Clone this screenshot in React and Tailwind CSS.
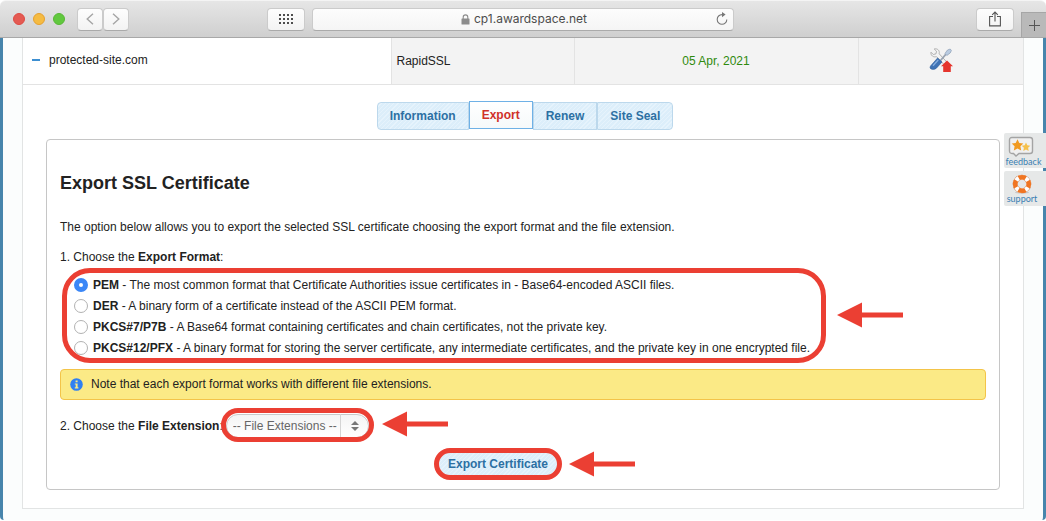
import React, { useState } from "react";

const STRIPES =
  "bg-[repeating-linear-gradient(135deg,#dceefa_0px,#dceefa_2px,#e6f3fc_2px,#e6f3fc_3px)]";

const tabs = ["Information", "Export", "Renew", "Site Seal"];

const formats = [
  {
    id: "pem",
    name: "PEM",
    text: "The most common format that Certificate Authorities issue certificates in - Base64-encoded ASCII files.",
  },
  {
    id: "der",
    name: "DER",
    text: "A binary form of a certificate instead of the ASCII PEM format.",
  },
  {
    id: "p7b",
    name: "PKCS#7/P7B",
    text: "A Base64 format containing certificates and chain certificates, not the private key.",
  },
  {
    id: "pfx",
    name: "PKCS#12/PFX",
    text: "A binary format for storing the server certificate, any intermediate certificates, and the private key in one encrypted file.",
  },
];

function Arrow({ className }) {
  return (
    <svg
      viewBox="0 0 66 26"
      className={`absolute h-[26px] w-[66px] ${className}`}
      fill="#eb3f33"
      aria-hidden="true"
    >
      <path d="M0 13 25 0.5V10.5H66V15.5H25V25.5Z" />
    </svg>
  );
}

function ToolbarButton({ label, className, children }) {
  return (
    <button
      type="button"
      aria-label={label}
      className={`flex h-[23px] items-center justify-center rounded border border-[#cbcbcb] border-b-[#aaaaaa] bg-linear-to-b from-[#fdfdfd] to-[#f3f3f3] ${className}`}
    >
      {children}
    </button>
  );
}

function BrowserBar() {
  return (
    <header className="grid h-[38px] grid-cols-[1fr_minmax(0,422px)_1fr] items-center rounded-t-md border-t border-b border-t-[#f4f4f4] border-b-[#a8a8a8] bg-linear-to-b from-[#e6e6e6] to-[#cfcfcf]">
      <div className="flex items-center justify-between pr-[7px] pl-[13px]">
        <div className="flex items-center">
          <div className="mr-3 flex gap-2">
            <span className="size-3 rounded-full border border-[#de4a43] bg-[#e45a52]" />
            <span className="size-3 rounded-full border border-[#e5a02f] bg-[#f5bb42]" />
            <span className="size-3 rounded-full border border-[#57b735] bg-[#61c83e]" />
          </div>
          <ToolbarButton label="Back" className="w-[26px]">
            <svg width="8" height="12" viewBox="0 0 8 12" fill="none" stroke="#a5a5a5" strokeWidth="1.4">
              <path d="M7 .7 1.2 6 7 11.3" />
            </svg>
          </ToolbarButton>
          <ToolbarButton label="Forward" className="w-[26px]">
            <svg width="8" height="12" viewBox="0 0 8 12" fill="none" stroke="#a5a5a5" strokeWidth="1.4">
              <path d="M1 .7 6.8 6 1 11.3" />
            </svg>
          </ToolbarButton>
        </div>
        <ToolbarButton label="Show tabs" className="w-[38px]">
          <svg width="14" height="10" viewBox="0 0 14 10" fill="#4d4d4d">
            {[0, 4, 8].map((y) =>
              [0, 4, 8, 12].map((x) => <rect key={`${x}-${y}`} x={x} y={y} width="2" height="2" />)
            )}
          </svg>
        </ToolbarButton>
      </div>

      <div className="flex h-[23px] items-center rounded border border-[#cbcbcb] border-b-[#aaaaaa] bg-linear-to-b from-[#fdfdfd] to-[#f5f5f5] pr-1 pl-5">
        <div className="flex flex-1 items-center justify-center gap-1 font-[Inter,sans-serif] text-[12px] leading-4 text-[#4c4c4c]">
          <svg width="9" height="11" viewBox="0 0 9 11">
            <rect x="0.5" y="4.5" width="8" height="6" rx=".6" fill="#8c8c8c" />
            <path d="M2.2 5V3.2a2.3 2.3 0 0 1 4.6 0V5" fill="none" stroke="#8c8c8c" strokeWidth="1.1" />
          </svg>
          <span>cp1.awardspace.net</span>
        </div>
        <button type="button" aria-label="Reload">
          <svg width="14" height="14" viewBox="0 0 14 14" fill="none" stroke="#777" strokeWidth="1.1">
            <path d="M8.5 2.6H7A4.8 4.8 0 1 0 11.8 7.4" />
            <path d="M7 0 10.6 2.6 7 5.2Z" fill="#777" stroke="none" />
          </svg>
        </button>
      </div>

      <div className="flex h-full items-center justify-end gap-[7px]">
        <ToolbarButton label="Share" className="w-[38px]">
          <svg width="12" height="16" viewBox="0 0 12 16" fill="none" stroke="#555" strokeWidth="1.1">
            <path d="M4 5.5H.6v9.4h10.8V5.5H8" />
            <path d="M6 10.5V1M3.2 3.8 6 1l2.8 2.8" />
          </svg>
        </ToolbarButton>
        <button
          type="button"
          aria-label="New tab"
          className="flex h-[25px] w-[25px] items-center justify-center self-end border-t border-l border-[#a6a6a6] bg-[#b9b9b9]"
        >
          <svg width="11" height="11" viewBox="0 0 11 11" stroke="#555">
            <path d="M5.5 0V11M0 5.5H11" />
          </svg>
        </button>
      </div>
    </header>
  );
}

function ToolsIcon() {
  return (
    <svg width="26" height="26" viewBox="0 0 26 26">
      <path
        d="M3 5.2 5.3 7.5 8 6.8 8.5 4.2 6.2 2C9.3 1 12 3.6 11.2 6.8L21 17.5 18.5 20 8.4 9.6C5.6 10.7 2.3 8.4 3 5.2Z"
        fill="#f3f3f3"
        stroke="#a9a9a9"
        strokeWidth=".9"
      />
      <path d="M12.5 13.5 18 7.2" stroke="#9aa4b2" strokeWidth="1.8" />
      <path d="M17 6.4 19.5 3 22.2 2 23.4 3.5 22.2 6 18.8 8.5Z" fill="#b9cbe1" stroke="#8d9fb6" strokeWidth=".7" />
      <path
        d="M9.6 11 14 15 8.4 21.2C6.7 22.9 2.6 22.7 2.1 21 1.8 19.6 3 18.4 3.8 17.5Z"
        fill="#3f73b5"
        stroke="#2b5c9b"
        strokeWidth=".6"
      />
      <path d="M5 18.7 10.2 13" stroke="#86aee0" strokeWidth="1.3" />
      <path d="M19 13.5 25 19.3H22.8V25H15.2V19.3H13Z" fill="#e5352d" />
    </svg>
  );
}

function CertificateRow() {
  return (
    <table className="w-full table-fixed border-collapse">
      <colgroup>
        <col />
        <col className="w-[183px]" />
        <col className="w-[284px]" />
        <col className="w-[165px]" />
      </colgroup>
      <tbody>
        <tr className="h-[46px] border-b border-[#e3e3e3]">
          <td className="pb-px pl-[9px]">
            <span className="flex items-center gap-[9px]">
              <span className="h-[2px] w-2 bg-[#3d8fd1]" />
              protected-site.com
            </span>
          </td>
          <td className="border-l border-[#e3e3e3] bg-[#f3f3f3] pl-[5px]">RapidSSL</td>
          <td className="border-l border-[#e3e3e3] bg-[#f3f3f3] text-center text-[#2f8a0d]">
            05 Apr, 2021
          </td>
          <td className="border-l border-[#e3e3e3] bg-[#f3f3f3] pb-px">
            <a href="#manage" aria-label="Manage" className="flex justify-center">
              <ToolsIcon />
            </a>
          </td>
        </tr>
      </tbody>
    </table>
  );
}

function TabBar({ active, onSelect }) {
  return (
    <nav className="mt-4 flex items-start justify-center pl-1 font-bold">
      {tabs.map((tab) => (
        <button
          key={tab}
          type="button"
          onClick={() => onSelect(tab)}
          className={
            tab === active
              ? "h-[28px] border border-[#6fb1e6] bg-linear-to-b from-white to-[#f6f9fa] px-3 text-[#d0312a]"
              : `mt-px h-[28px] border border-[#bcd8ec] px-3 text-[#2c70a3] first:rounded-l last:rounded-r ${STRIPES}`
          }
        >
          {tab}
        </button>
      ))}
    </nav>
  );
}

function FormatList({ value, onChange }) {
  return (
    <div role="radiogroup" aria-labelledby="format-label" className="relative mt-[10px] ml-[14px] w-fit">
      {formats.map((f) => (
        <label key={f.id} className="flex h-[21px] items-center gap-[5px]">
          <input
            type="radio"
            name="format"
            value={f.id}
            checked={value === f.id}
            onChange={() => onChange(f.id)}
            className="size-[14px] appearance-none rounded-full border border-[#b2b2b2] bg-white checked:border-[5px] checked:border-[#3b87f7]"
          />
          <span>
            <b>{f.name}</b> - {f.text}
          </span>
        </label>
      ))}
      <span className="pointer-events-none absolute -top-[7px] -right-4 -bottom-1 -left-3 rounded-[28px] border-[5px] border-[#eb3f33]" />
      <Arrow className="top-[27px] left-full ml-[27px]" />
    </div>
  );
}

function SideLinks() {
  return (
    <aside className="absolute top-[133px] right-0 flex w-[42px] flex-col gap-[3px] font-[Lato,sans-serif] text-[9px] leading-[10px] text-[#3a80b3]">
      <a href="#feedback" className="flex h-[35px] flex-col items-center rounded-l-xs bg-[#e6e8e8] pt-[3px] pr-[3px]">
        <svg width="26" height="21" viewBox="0 0 26 21" className="mr-[6px] shrink-0">
          <path
            d="M4 1.5H22Q24.5 1.5 24.5 4V15Q24.5 17.5 22 17.5H11L8 20 5.5 17.5H4Q1.5 17.5 1.5 15V4Q1.5 1.5 4 1.5Z"
            fill="#f0f0f0"
            stroke="#a4a4a4"
            strokeWidth="1.4"
          />
          <path d="m9.5 3.2 1.8 3.7 4 .5-2.9 2.8.8 4.2-3.7-2-3.7 2 .8-4.2-2.9-2.8 4-.5Z" fill="#f19a20" />
          <path d="m18 6.5 1.3 2.8 3 .4-2.2 2.1.6 3.1-2.7-1.5-2.7 1.5.6-3.1-2.2-2.1 3-.4Z" fill="#f5c04b" />
        </svg>
        feedback
      </a>
      <a href="#support" className="flex h-[35px] flex-col items-center rounded-l-xs bg-[#e6e8e8] pt-[3px] pr-[6px]">
        <svg width="20" height="20" viewBox="0 0 20 20" className="shrink-0">
          <ellipse cx="10" cy="18.5" rx="7" ry="1" fill="#c8c8c8" />
          <circle cx="10" cy="10" r="6.8" fill="none" stroke="#c87a4a" strokeWidth="5" />
          <circle cx="10" cy="10" r="6.8" fill="none" stroke="#fff" strokeWidth="4.4" />
          <circle
            cx="10"
            cy="10"
            r="6.8"
            fill="none"
            stroke="#f07522"
            strokeWidth="4.6"
            strokeDasharray="7.2 3.48"
            strokeDashoffset="3.6"
          />
        </svg>
        support
      </a>
    </aside>
  );
}

export default function App() {
  const [activeTab, setActiveTab] = useState("Export");
  const [format, setFormat] = useState("pem");
  const [extension, setExtension] = useState("");

  return (
    <div className="relative bg-white font-['Liberation_Sans',Arial,sans-serif] text-[12px] leading-4 text-[#222]">
      <BrowserBar />
      <main className="mb-px rounded-b-sm border-x-[3px] border-[#4785ac] bg-[#fbfdfd] px-[19px] pb-[11px]">
        <div className="border border-t-0 border-[#e2e4e4] bg-white pb-[18px]">
          <CertificateRow />
          <TabBar active={activeTab} onSelect={setActiveTab} />

          <section className="mx-[23px] mt-[9px] rounded border border-[#c6c6c6] px-[13px] pt-[31px] pb-[13px]">
            <h1 className="text-[18px] leading-6 font-bold">Export SSL Certificate</h1>
            <p className="mt-6">
              The option below allows you to export the selected SSL certificate choosing the export
              format and the file extension.
            </p>
            <p id="format-label" className="mt-[14px]">
              1. Choose the <b>Export Format</b>:
            </p>
            <FormatList value={format} onChange={setFormat} />

            <div className="mt-[10px] flex h-[31px] items-center gap-2 rounded border border-[#f3c449] bg-[#fbea86] pl-[9px]">
              <svg width="13" height="13" viewBox="0 0 13 13">
                <circle cx="6.5" cy="6.5" r="6.3" fill="#2f80f2" />
                <path d="M5.6 2.6h2v1.7h-2zM4.8 5.4h2.8v3.9h.8v1.1H4.8V9.3h.9V6.5h-.9z" fill="#fbea86" />
              </svg>
              <span className="pb-px">Note that each export format works with different file extensions.</span>
            </div>

            <div className="mt-[14px] flex items-center">
              <label htmlFor="extension">
                2. Choose the <b>File Extension</b>:
              </label>
              <div className="relative ml-[3px]">
                <select
                  id="extension"
                  value={extension}
                  onChange={(e) => setExtension(e.target.value)}
                  className="block h-6 w-[143px] appearance-none rounded-xl border border-[#c9c9c9] bg-linear-to-b from-[#f4f4f4] to-white pl-[6px] text-[#666]"
                >
                  <option value="">-- File Extensions --</option>
                </select>
                <span className="pointer-events-none absolute inset-y-0 right-0 flex w-[29px] items-center border-l border-[#d4d4d4] pl-[10px]">
                  <svg width="8" height="10" viewBox="0 0 8 10" fill="#777">
                    <path d="M4 0 8 4H0ZM4 10 0 6H8Z" />
                  </svg>
                </span>
                <span className="pointer-events-none absolute -inset-x-[5px] -top-[6px] -bottom-[4px] rounded-full border-[5px] border-[#eb3f33]" />
                <Arrow className="-top-[3px] left-full ml-[13px]" />
              </div>
            </div>

            <div className="mt-[14px] flex justify-center">
              <div className="relative mr-[50px]">
                <button
                  type="button"
                  className={`block h-6 rounded-full px-[10px] font-bold text-[#2c70a3] ${STRIPES}`}
                >
                  Export Certificate
                </button>
                <span className="pointer-events-none absolute -inset-[4px] rounded-full border-[5px] border-[#eb3f33]" />
                <Arrow className="-top-px left-full ml-[11px]" />
              </div>
            </div>
          </section>
        </div>
      </main>
      <SideLinks />
    </div>
  );
}
